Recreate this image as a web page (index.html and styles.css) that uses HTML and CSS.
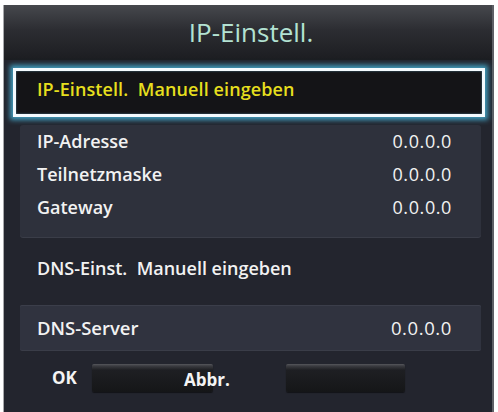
FILE: index.html
```html
<!DOCTYPE html>
<html lang="de">
<head>
<meta charset="utf-8">
<title>IP-Einstell.</title>
<link rel="stylesheet" href="styles.css">
</head>
<body>
<div class="frame">
  <div class="header"><h1 class="title">IP-Einstell.</h1></div>
  <div class="focus"><span class="focus-text">IP-Einstell.&nbsp; Manuell eingeben</span></div>
  <div class="panel">
    <div class="row"><span>IP-Adresse</span><span class="value">0.0.0.0</span></div>
    <div class="row"><span>Teilnetzmaske</span><span class="value">0.0.0.0</span></div>
    <div class="row"><span>Gateway</span><span class="value">0.0.0.0</span></div>
  </div>
  <div class="dns-mode">DNS-Einst.&nbsp; Manuell eingeben</div>
  <div class="panel panel-dns">
    <div class="row row-dns"><span>DNS-Server</span><span class="value">0.0.0.0</span></div>
  </div>
  <div class="buttons">
    <span class="btn-label">OK</span>
    <div class="btn btn-first"><span class="btn-label btn-abbr">Abbr.</span></div>
    <div class="btn btn-second"></div>
  </div>
</div>
</body>
</html>
```
FILE: styles.css
```css
html, body {
  margin: 0;
  padding: 0;
  background: #ffffff;
}
body {
  font-family: "Open Sans", "DejaVu Sans", sans-serif;
  width: 498px;
  height: 412px;
  overflow: hidden;
}
.frame {
  margin: 5px 0 0 3px;
  width: 491px;
  height: 407px;
  box-sizing: border-box;
  background: #23252e;
  border-left: 1px solid #a7a8ab;
  border-right: 2px solid #5e6066;
  display: flex;
  flex-direction: column;
}
.header {
  height: 55px;
  background: linear-gradient(to bottom, #46484d 0%, #2c2d32 45%, #1c1d21 100%);
  box-sizing: border-box;
  padding-top: 10px;
  text-align: center;
}
.title {
  margin: 0 0 0 6px;
  font-size: 26px;
  line-height: 35px;
  font-weight: 400;
  color: #b3e2d2;
}
.focus {
  margin: 8px 7px 0 9px;
  height: 49px;
  box-sizing: border-box;
  border: 3px solid #f4fbff;
  background: #141417;
  box-shadow: 0 0 5px 3px rgba(70, 178, 214, 0.85), inset 0 0 2px rgba(120, 200, 230, 0.6);
  padding: 5px 0 0 21px;
}
.focus-text {
  font-size: 18px;
  line-height: 26px;
  font-weight: 600;
  color: #e6df1e;
  letter-spacing: 0.1px;
}
.panel {
  margin: 8px 11px 0 16px;
  background: #2e313c;
  border-radius: 3px;
  padding: 0 30px 13px 17px;
  box-shadow: 0 1px 0 #3a3d48;
}
.row {
  display: flex;
  justify-content: space-between;
  font-size: 18px;
  line-height: 33px;
  font-weight: 600;
  color: #f2f2f2;
}
.value {
  font-weight: 500;
  letter-spacing: 0.6px;
  margin-right: -1px;
}
.dns-mode {
  margin: 15px 0 0 33px;
  font-size: 18px;
  line-height: 33px;
  font-weight: 600;
  color: #f2f2f2;
}
.panel-dns {
  margin-top: 20px;
  padding-bottom: 0;
  background: #30333f;
  border-radius: 2px;
  box-shadow: inset 0 1px 0 #3b3e4a, 0 1px 0 #3a3d48;
}
.row-dns {
  line-height: 45px;
  font-size: 18.5px;
}
.buttons {
  margin-top: 14px;
  display: flex;
  align-items: center;
  height: 28px;
  padding-left: 48px;
}
.btn-label {
  font-size: 17px;
  font-weight: 700;
  color: #f4f4f4;
  line-height: 28px;
}
.btn {
  height: 28px;
  box-sizing: border-box;
  border-radius: 2px;
  background: linear-gradient(to bottom, #56575c 0px, #3a3b40 2px, #1e1f23 6px, #151618 100%);
  box-shadow: 0 1px 1px rgba(0,0,0,0.5);
}
.btn-first {
  margin-left: 15px;
  width: 121px;
  display: flex;
  justify-content: flex-end;
  align-items: center;
}
.btn-abbr {
  margin-right: -17px;
  padding-top: 4px;
}
.btn-second {
  margin-left: 73px;
  width: 119px;
}
```
